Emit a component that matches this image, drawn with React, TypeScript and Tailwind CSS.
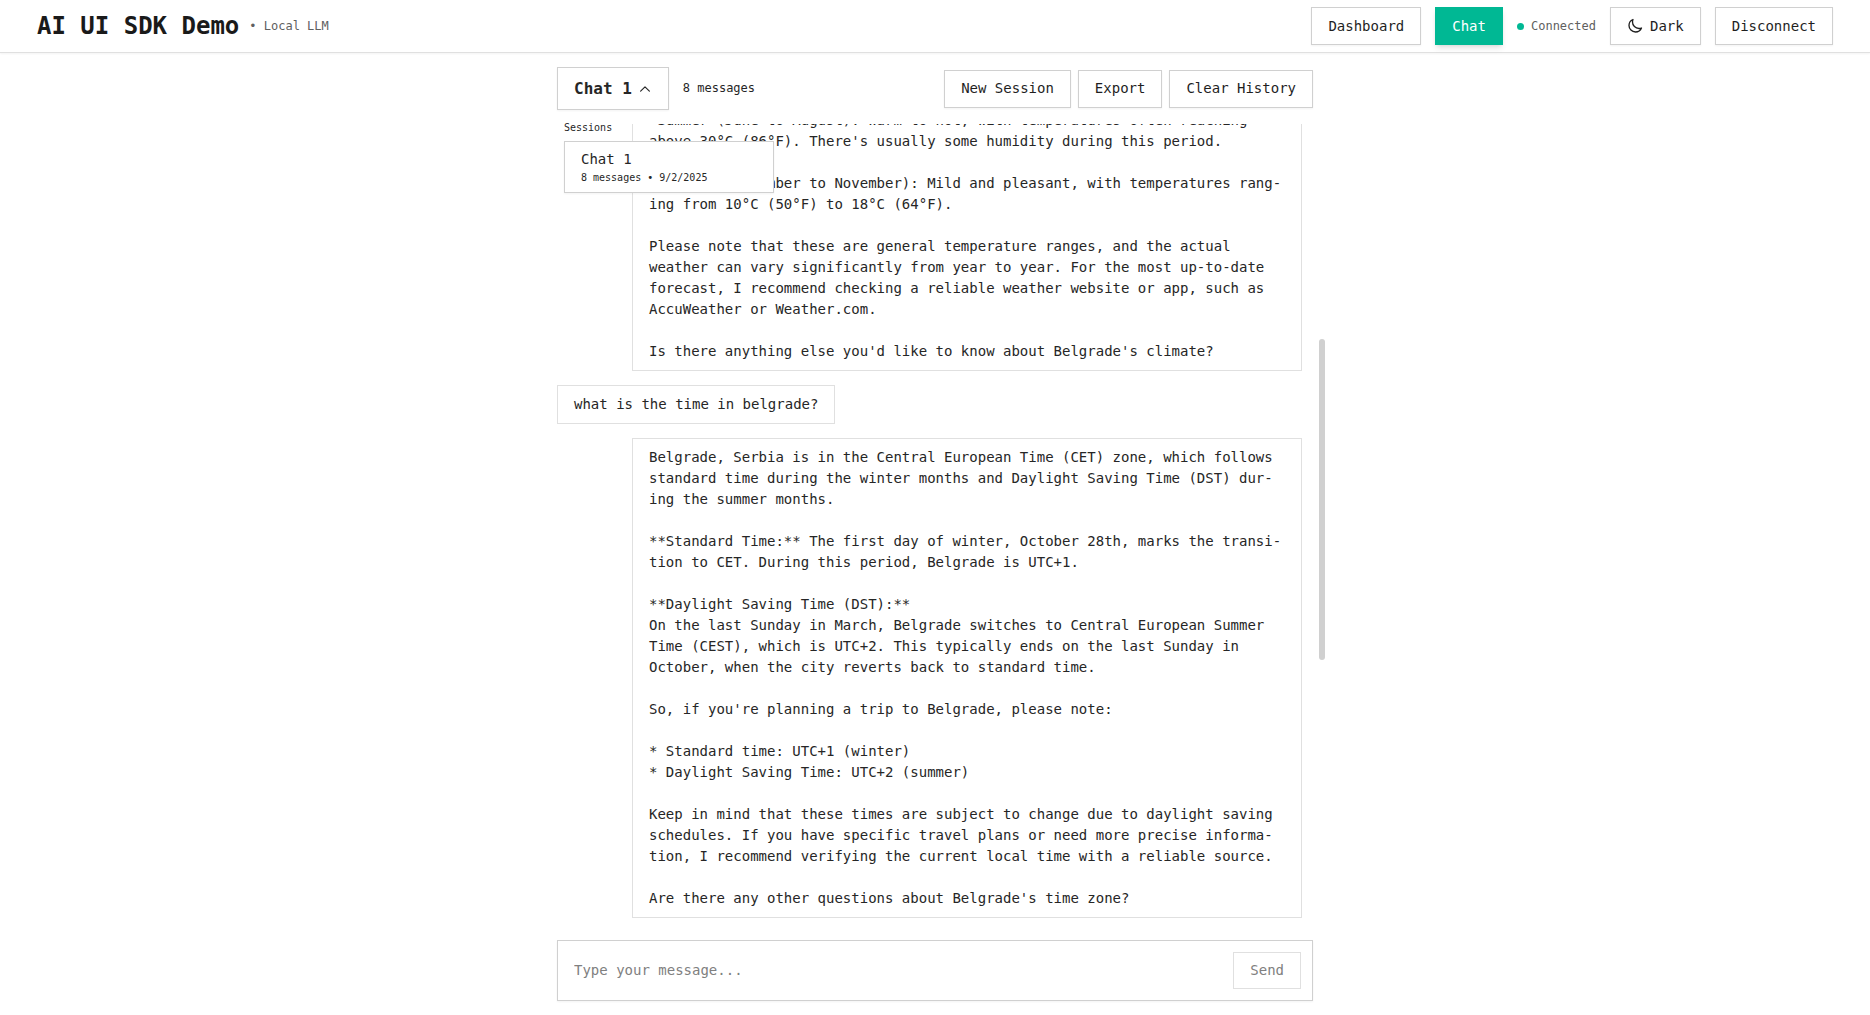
import { useState } from "react";
import { clsx } from "clsx";
import type { ReactNode } from "react";

const REPLY_CLIMATE = `*Summer (June to August): Warm to hot, with temperatures often reaching
above 30°C (86°F). There's usually some humidity during this period.

*Autumn (September to November): Mild and pleasant, with temperatures rang-
ing from 10°C (50°F) to 18°C (64°F).

Please note that these are general temperature ranges, and the actual
weather can vary significantly from year to year. For the most up-to-date
forecast, I recommend checking a reliable weather website or app, such as
AccuWeather or Weather.com.

Is there anything else you'd like to know about Belgrade's climate?`;

const REPLY_TIME = `Belgrade, Serbia is in the Central European Time (CET) zone, which follows
standard time during the winter months and Daylight Saving Time (DST) dur-
ing the summer months.

**Standard Time:** The first day of winter, October 28th, marks the transi-
tion to CET. During this period, Belgrade is UTC+1.

**Daylight Saving Time (DST):**
On the last Sunday in March, Belgrade switches to Central European Summer
Time (CEST), which is UTC+2. This typically ends on the last Sunday in
October, when the city reverts back to standard time.

So, if you're planning a trip to Belgrade, please note:

* Standard time: UTC+1 (winter)
* Daylight Saving Time: UTC+2 (summer)

Keep in mind that these times are subject to change due to daylight saving
schedules. If you have specific travel plans or need more precise informa-
tion, I recommend verifying the current local time with a reliable source.

Are there any other questions about Belgrade's time zone?`;

function Button({ primary, children }: { primary?: boolean; children: ReactNode }) {
  return (
    <button
      type="button"
      className={clsx(
        "flex h-[38px] items-center gap-[7px] border px-4 whitespace-nowrap",
        primary
          ? "border-[#00b894] bg-[#00b894] text-white shadow-md"
          : "border-[#d0d0d0] bg-white text-[#1f1f1f] shadow-xs",
      )}
    >
      {children}
    </button>
  );
}

function Bubble({ from, text }: { from: "user" | "assistant"; text: string }) {
  return (
    <div
      className={clsx(
        "shrink-0 border border-[#e0e0e0] bg-white px-4 py-2 whitespace-pre",
        from === "user" ? "self-start" : "w-[670px] self-end",
      )}
    >
      {text}
    </div>
  );
}

export default function App() {
  const [draft, setDraft] = useState("");
  return (
    <div className="flex h-screen flex-col bg-white font-['DejaVu_Sans_Mono',monospace] text-[14px] leading-[21px] text-[#262626]">
      <header className="flex h-[53px] shrink-0 items-center justify-between border-b border-[#e0e0e0] px-[37px] shadow-xs">
        <div className="flex items-center gap-2.5">
          <h1 className="text-[24px] leading-8 font-bold text-[#1a1a1a]">AI UI SDK Demo</h1>
          <span className="text-[12px] text-[#606060]">• Local LLM</span>
        </div>
        <nav className="flex items-center gap-3.5">
          <Button>Dashboard</Button>
          <Button primary>Chat</Button>
          <div className="flex items-center gap-[7px] text-[12px] text-[#606060]">
            <span className="size-[7px] rounded-full bg-[#00b894]" />
            Connected
          </div>
          <Button>
            <svg viewBox="0 0 24 24" className="size-4" fill="none" stroke="currentColor" strokeWidth="2" strokeLinecap="round" strokeLinejoin="round" aria-hidden="true">
              <path d="M21.752 15.002A9.72 9.72 0 0 1 18 15.75c-5.385 0-9.75-4.365-9.75-9.75 0-1.33.266-2.597.748-3.752A9.753 9.753 0 0 0 3 11.25C3 16.635 7.365 21 12.75 21a9.753 9.753 0 0 0 9.002-5.998Z" />
            </svg>
            Dark
          </Button>
          <Button>Disconnect</Button>
        </nav>
      </header>

      <main className="mx-auto flex min-h-0 w-full max-w-[756px] flex-1 flex-col pt-3.5 pb-3.5">
        <div className="flex shrink-0 items-center justify-between">
          <div className="relative flex items-center gap-3.5">
            <button type="button" aria-expanded="true" className="flex h-[43px] items-center gap-1.5 border border-[#d0d0d0] bg-white px-4 text-[16px] font-bold shadow-xs">
              Chat 1
              <svg viewBox="0 0 24 24" className="size-3.5" fill="none" stroke="currentColor" strokeWidth="2" strokeLinecap="round" strokeLinejoin="round" aria-hidden="true">
                <path d="m4.5 15.75 7.5-7.5 7.5 7.5" />
              </svg>
            </button>
            <span className="text-[12px]">8 messages</span>

            <div className="absolute top-[53px] left-[7px] z-10 w-[210px]">
              <div className="mb-[5px] text-[10px] leading-4">Sessions</div>
              <button type="button" className="block h-[52px] w-full border border-[#d0d0d0] bg-white px-4 text-left shadow-xs">
                <span className="block leading-[21px]">Chat 1</span>
                <span className="block text-[10px] leading-4">8 messages • 9/2/2025</span>
              </button>
            </div>
          </div>
          <div className="flex gap-[7px]">
            <Button>New Session</Button>
            <Button>Export</Button>
            <Button>Clear History</Button>
          </div>
        </div>

        <div className="relative mt-3.5 min-h-0 flex-1">
          <div className="flex h-full flex-col justify-end gap-3.5 overflow-hidden pr-[11px] pb-2">
            <Bubble from="assistant" text={REPLY_CLIMATE} />
            <Bubble from="user" text="what is the time in belgrade?" />
            <Bubble from="assistant" text={REPLY_TIME} />
          </div>
          <div className="absolute top-[215px] -right-3 h-[321px] w-1.5 rounded-full bg-[#d0d0d0]" />
        </div>

        <form onSubmit={(e) => e.preventDefault()} className="mt-3.5 flex h-[61px] shrink-0 items-center border border-[#d0d0d0] bg-white pr-[11px] pl-4 shadow-xs">
          <input
            type="text"
            aria-label="Message"
            placeholder="Type your message..."
            value={draft}
            onChange={(e) => setDraft(e.target.value)}
            className="min-w-0 flex-1 outline-none placeholder:text-[#808080]"
          />
          <button type="submit" disabled={!draft} className="h-[37px] border border-[#e0e0e0] px-4 text-[#808080]">
            Send
          </button>
        </form>
      </main>
    </div>
  );
}
